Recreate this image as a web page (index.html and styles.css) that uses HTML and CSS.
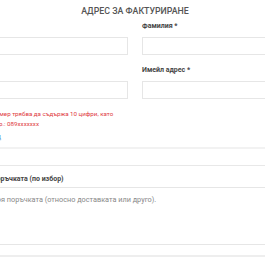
FILE: index.html
```html
<!DOCTYPE html>
<html lang="bg">
<head>
<meta charset="UTF-8" />
<meta name="viewport" content="width=device-width, initial-scale=1.0" />
<title>Адрес за фактуриране</title>
<link rel="stylesheet" href="styles.css">
</head>
<body>
<div class="checkout">
    <h2 class="title">Адрес за фактуриране</h2>

    <!-- billing fields -->
    <div class="fields">
        <div class="field">
            <label for="firstName">Име *</label>
            <input type="text" id="firstName">
        </div>
        <div class="field">
            <label for="lastName">Фамилия *</label>
            <input type="text" id="lastName">
        </div>
        <div class="field">
            <label for="phone">Телефон *</label>
            <input type="tel" id="phone">
            <p class="error">Телефонният номер трябва да съдържа 10 цифри, като започва с 0, напр.: 089xxxxxxx</p>
            <a class="more" href="#">Вход</a>
        </div>
        <div class="field">
            <label for="email">Имейл адрес *</label>
            <input type="email" id="email">
        </div>
    </div>

    <div class="box"></div>

    <!-- order notes -->
    <div class="notes">
        <label for="notes">Бележки за поръчката (по избор)</label>
        <textarea id="notes" placeholder="Инфо за твоя поръчката (относно доставката или друго)."></textarea>
    </div>
    <div class="next"></div>
</div>
</body>
</html>
```

FILE: styles.css
```css
:root{
    --line:#e6e6e6;
    --label:#444;
}
body{
    margin:0;
    font-family:Roboto,"Noto Sans",Arial,sans-serif;
    background:#fff;
    color:#333;
    overflow:hidden;
}
.checkout{width:366px;margin-left:-48px}

.title{
    margin:5px 0 0;
    text-align:center;
    font-size:8.8px;
    line-height:12px;
    font-weight:500;
    color:#555;
    text-transform:uppercase;
}

/* ── Billing fields ── */
.fields{
    display:grid;
    grid-template-columns:176px 176px;
    column-gap:14px;
    row-gap:10px;
    margin-top:4px;
    align-items:start;
}
.field label,.notes label{
    display:block;
    font-size:7px;
    line-height:10px;
    font-weight:700;
    color:var(--label);
    margin-bottom:6px;
}
.field input{
    display:block;
    width:100%;
    height:18px;
    box-sizing:border-box;
    border:1px solid var(--line);
    background:#fff;
}
.error{
    margin:10px 0 0;
    font-size:6.2px;
    line-height:10px;
    color:#e0393e;
}
.more{
    display:block;
    width:49px;
    text-align:right;
    font-size:7px;
    line-height:10px;
    color:#4a8fd0;
    text-decoration:none;
    margin-top:3px;
}

/* ── Full width rows ── */
.box{
    height:16px;
    margin-top:5px;
    border-top:2px solid #f2f2f2;
    border-bottom:1px solid #e8e8e8;
}
.notes{margin-top:8px}
.notes label{margin-bottom:3px}
.notes textarea{
    display:block;
    width:100%;
    height:58px;
    box-sizing:border-box;
    border:1px solid var(--line);
    border-width:1px 0;
    padding:7px 7px;
    resize:none;
    font-family:inherit;
    font-size:7.3px;
}
.notes textarea::placeholder{color:#888}
.next{height:10px;border-bottom:2px solid #eee}
```
